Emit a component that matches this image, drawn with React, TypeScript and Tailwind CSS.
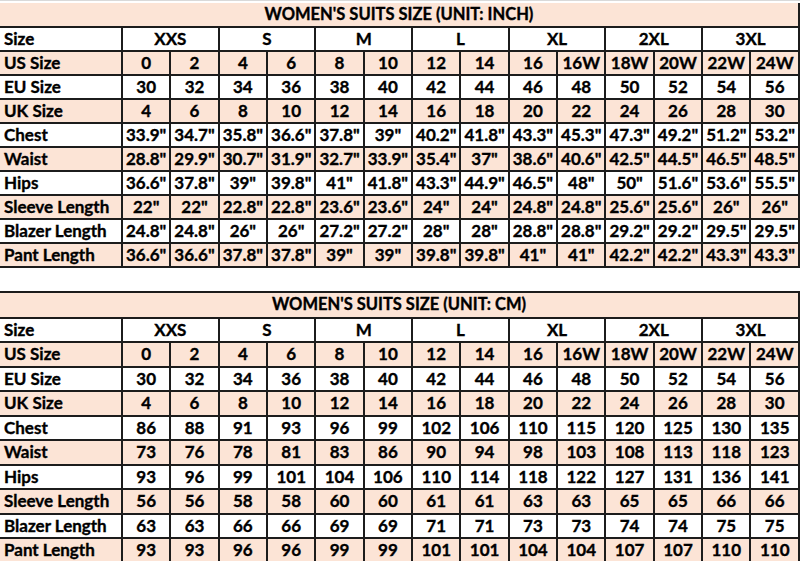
import React from "react"

const groups = ["XXS", "S", "M", "L", "XL", "2XL", "3XL"]

type Row = [string, ...string[]]

const inchRows: Row[] = [
  ["US Size", "0", "2", "4", "6", "8", "10", "12", "14", "16", "16W", "18W", "20W", "22W", "24W"],
  ["EU Size", "30", "32", "34", "36", "38", "40", "42", "44", "46", "48", "50", "52", "54", "56"],
  ["UK Size", "4", "6", "8", "10", "12", "14", "16", "18", "20", "22", "24", "26", "28", "30"],
  ["Chest", '33.9"', '34.7"', '35.8"', '36.6"', '37.8"', '39"', '40.2"', '41.8"', '43.3"', '45.3"', '47.3"', '49.2"', '51.2"', '53.2"'],
  ["Waist", '28.8"', '29.9"', '30.7"', '31.9"', '32.7"', '33.9"', '35.4"', '37"', '38.6"', '40.6"', '42.5"', '44.5"', '46.5"', '48.5"'],
  ["Hips", '36.6"', '37.8"', '39"', '39.8"', '41"', '41.8"', '43.3"', '44.9"', '46.5"', '48"', '50"', '51.6"', '53.6"', '55.5"'],
  ["Sleeve Length", '22"', '22"', '22.8"', '22.8"', '23.6"', '23.6"', '24"', '24"', '24.8"', '24.8"', '25.6"', '25.6"', '26"', '26"'],
  ["Blazer Length", '24.8"', '24.8"', '26"', '26"', '27.2"', '27.2"', '28"', '28"', '28.8"', '28.8"', '29.2"', '29.2"', '29.5"', '29.5"'],
  ["Pant Length", '36.6"', '36.6"', '37.8"', '37.8"', '39"', '39"', '39.8"', '39.8"', '41"', '41"', '42.2"', '42.2"', '43.3"', '43.3"'],
]

const cmRows: Row[] = [
  ["US Size", "0", "2", "4", "6", "8", "10", "12", "14", "16", "16W", "18W", "20W", "22W", "24W"],
  ["EU Size", "30", "32", "34", "36", "38", "40", "42", "44", "46", "48", "50", "52", "54", "56"],
  ["UK Size", "4", "6", "8", "10", "12", "14", "16", "18", "20", "22", "24", "26", "28", "30"],
  ["Chest", "86", "88", "91", "93", "96", "99", "102", "106", "110", "115", "120", "125", "130", "135"],
  ["Waist", "73", "76", "78", "81", "83", "86", "90", "94", "98", "103", "108", "113", "118", "123"],
  ["Hips", "93", "96", "99", "101", "104", "106", "110", "114", "118", "122", "127", "131", "136", "141"],
  ["Sleeve Length", "56", "56", "58", "58", "60", "60", "61", "61", "63", "63", "65", "65", "66", "66"],
  ["Blazer Length", "63", "63", "66", "66", "69", "69", "71", "71", "73", "73", "74", "74", "75", "75"],
  ["Pant Length", "93", "93", "96", "96", "99", "99", "101", "101", "104", "104", "107", "107", "110", "110"],
]

function SizeTable({ title, rows, rowH }: { title: string; rows: Row[]; rowH: string }) {
  return (
    <table className="w-[800px] table-fixed border-collapse text-[17px] leading-[18px] font-bold text-black [-webkit-text-stroke:0.35px_black]">
      <colgroup>
        <col className="w-[122px]" />
        {Array.from({ length: 14 }).map((_, i) => <col key={i} />)}
      </colgroup>
      <tbody>
        <tr className={`${rowH} bg-[#fce4d6]`}>
          <td colSpan={15} className="border-b-2 border-r-2 border-[#1c1c1c] p-0 pb-[2px] text-center text-[16.5px]">{title}</td>
        </tr>
        <tr className={`${rowH} bg-white`}>
          <td className="border-2 border-l-0 border-[#1c1c1c] px-1 py-0 text-left">Size</td>
          {groups.map(g => (
            <td key={g} colSpan={2} className="border-2 border-[#1c1c1c] p-0 text-center">{g}</td>
          ))}
        </tr>
        {rows.map((r, i) => (
          <tr key={r[0]} className={`${rowH} ${i % 2 === 0 ? "bg-[#fce4d6]" : "bg-white"}`}>
            <td className="border-2 border-l-0 border-[#1c1c1c] px-1 py-0 text-left whitespace-nowrap">{r[0]}</td>
            {r.slice(1).map((v, j) => (
              <td key={j} className="border-2 border-[#1c1c1c] p-0 text-center whitespace-nowrap">{v}</td>
            ))}
          </tr>
        ))}
      </tbody>
    </table>
  )
}

export default function App() {
  return (
    <div className="w-[800px] h-[561px] overflow-hidden bg-white pt-[2px] border-t border-[#d9d9d9]" style={{ fontFamily: "Lato, 'Open Sans', sans-serif" }}>
      <SizeTable title="WOMEN'S SUITS SIZE (UNIT: INCH)" rows={inchRows} rowH="h-[24px]" />
      <div className="h-[23px]" />
      <div className="border-t-2 border-[#1c1c1c]">
        <SizeTable title="WOMEN'S SUITS SIZE (UNIT: CM)" rows={cmRows} rowH="h-[24.5px]" />
      </div>
    </div>
  )
}
